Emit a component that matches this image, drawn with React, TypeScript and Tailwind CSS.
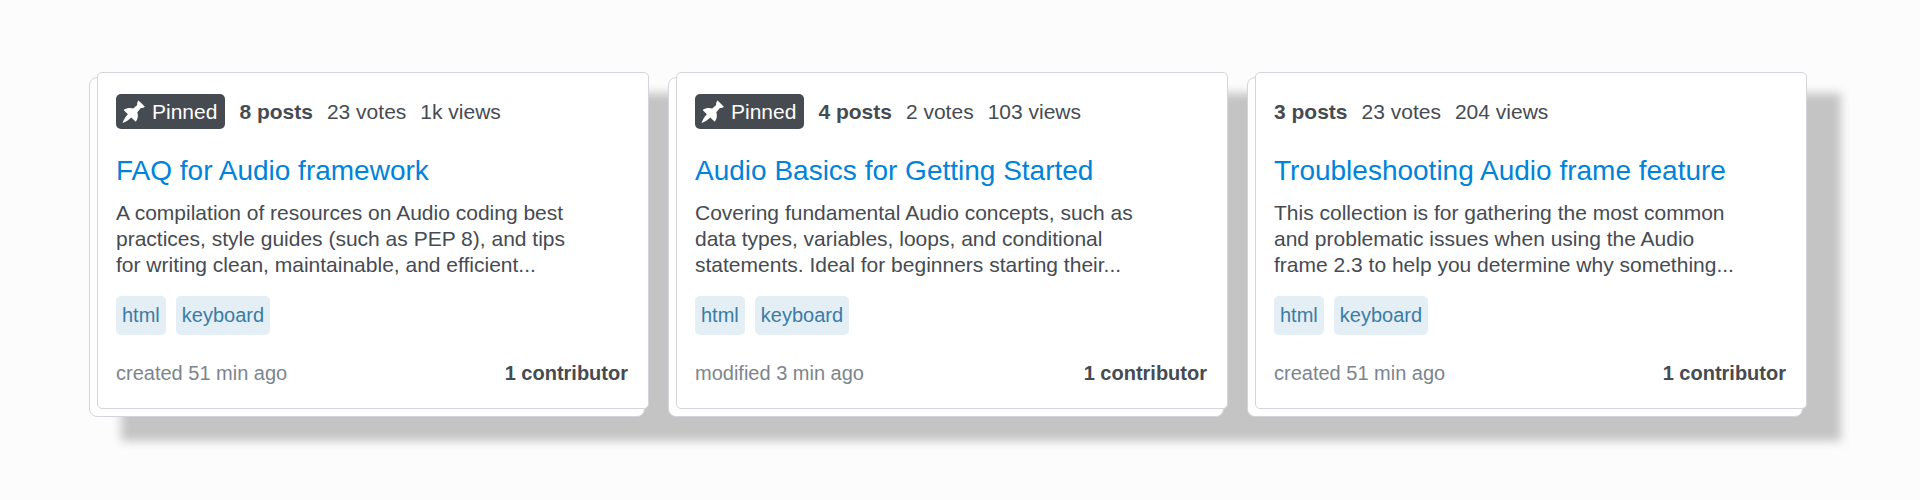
interface Collection {
  id: number;
  title: string;
  excerpt: string;
  posts: string;
  votes: string;
  views: string;
  pinned: boolean;
  activity: string;
  tags: string[];
  contributors: string;
}

const collections: Collection[] = [
  {
    id: 1,
    title: 'FAQ for Audio framework',
    excerpt:
      'A compilation of resources on Audio coding best practices, style guides (such as PEP 8), and tips for writing clean, maintainable, and efficient...',
    posts: '8 posts',
    votes: '23 votes',
    views: '1k views',
    pinned: true,
    activity: 'created 51 min ago',
    tags: ['html', 'keyboard'],
    contributors: '1 contributor',
  },
  {
    id: 2,
    title: 'Audio Basics for Getting Started',
    excerpt:
      'Covering fundamental Audio concepts, such as data types, variables, loops, and conditional statements. Ideal for beginners starting their...',
    posts: '4 posts',
    votes: '2 votes',
    views: '103 views',
    pinned: true,
    activity: 'modified 3 min ago',
    tags: ['html', 'keyboard'],
    contributors: '1 contributor',
  },
  {
    id: 3,
    title: 'Troubleshooting Audio frame feature',
    excerpt:
      'This collection is for gathering the most common and problematic issues when using the Audio frame 2.3 to help you determine why something...',
    posts: '3 posts',
    votes: '23 votes',
    views: '204 views',
    pinned: false,
    activity: 'created 51 min ago',
    tags: ['html', 'keyboard'],
    contributors: '1 contributor',
  },
];

function PinIcon() {
  return (
    <svg className="w-6 h-6" viewBox="0 0 24 24" fill="currentColor" aria-hidden="true">
      <path d="M16.6.4 22.9 6.8C21.6 7.9 20.2 8.2 18.9 7.9L15.3 12.2C16.4 15.4 16 18.8 13.8 21.8L9.2 17.4C6.8 19.8 4 21.7.5 23 1.6 19.7 3.3 16.9 5.9 14.2L1.6 9.9C4.8 8 8.2 7.7 11.2 8.6L15.2 5C14.9 3.4 15.3 1.8 16.6.4Z" />
    </svg>
  );
}

function CollectionCard({ collection }: { collection: Collection }) {
  return (
    <article className="relative">
      {/* Sheet peeking out behind the card */}
      <div className="absolute -left-2 right-1 top-[5px] -bottom-2 bg-white border border-[#d2d6da] rounded-lg" />

      <div className="relative h-full flex flex-col bg-white border border-[#d2d6da] rounded-[5px] pl-[18px] pr-5 pt-[21px] pb-[23px]">
        <div className="flex items-center gap-[14px] h-[35px] text-[21px] text-[#464b52]">
          {collection.pinned && (
            <span className="flex items-center gap-1.5 h-full pl-1.5 pr-2 bg-[#464a51] text-white rounded-[5px]">
              <PinIcon />
              Pinned
            </span>
          )}
          <span className="font-bold">{collection.posts}</span>
          <span>{collection.votes}</span>
          <span>{collection.views}</span>
        </div>

        <h2 className="mt-6 text-[28px] leading-9">
          <a href="#" className="text-[#0083da] hover:text-[#0a95ff]">
            {collection.title}
          </a>
        </h2>
        <p className="mt-[11px] pr-9 text-[21px] leading-[26px] text-[#464b52]">
          {collection.excerpt}
        </p>

        <div className="flex gap-2.5 mt-[18px]">
          {collection.tags.map((tag) => (
            <a
              key={tag}
              href="#"
              className="px-1.5 text-[20px] leading-[39px] text-[#3a7ca5] bg-[#e3eef5] rounded-[5px]"
            >
              {tag}
            </a>
          ))}
        </div>

        <div className="flex items-center justify-between mt-[26px] text-[20px] leading-6">
          <span className="text-[#7c858e]">{collection.activity}</span>
          <span className="font-bold text-[#464b52]">{collection.contributors}</span>
        </div>
      </div>
    </article>
  );
}

export default function App() {
  return (
    <main className="min-h-screen bg-[#fcfcfc] pt-[72px] pb-16 pl-[97px] pr-[113px] font-['Liberation_Sans',Arial,sans-serif]">
      <div className="relative isolate">
        {/* One shadow shared by the whole row */}
        <div className="absolute -z-10 left-6 -right-[34px] top-[21px] -bottom-8 bg-[#c4c4c4] blur-[5px]" />
        <div className="grid grid-cols-3 gap-[27px]">
          {collections.map((collection) => (
            <CollectionCard key={collection.id} collection={collection} />
          ))}
        </div>
      </div>
    </main>
  );
}
